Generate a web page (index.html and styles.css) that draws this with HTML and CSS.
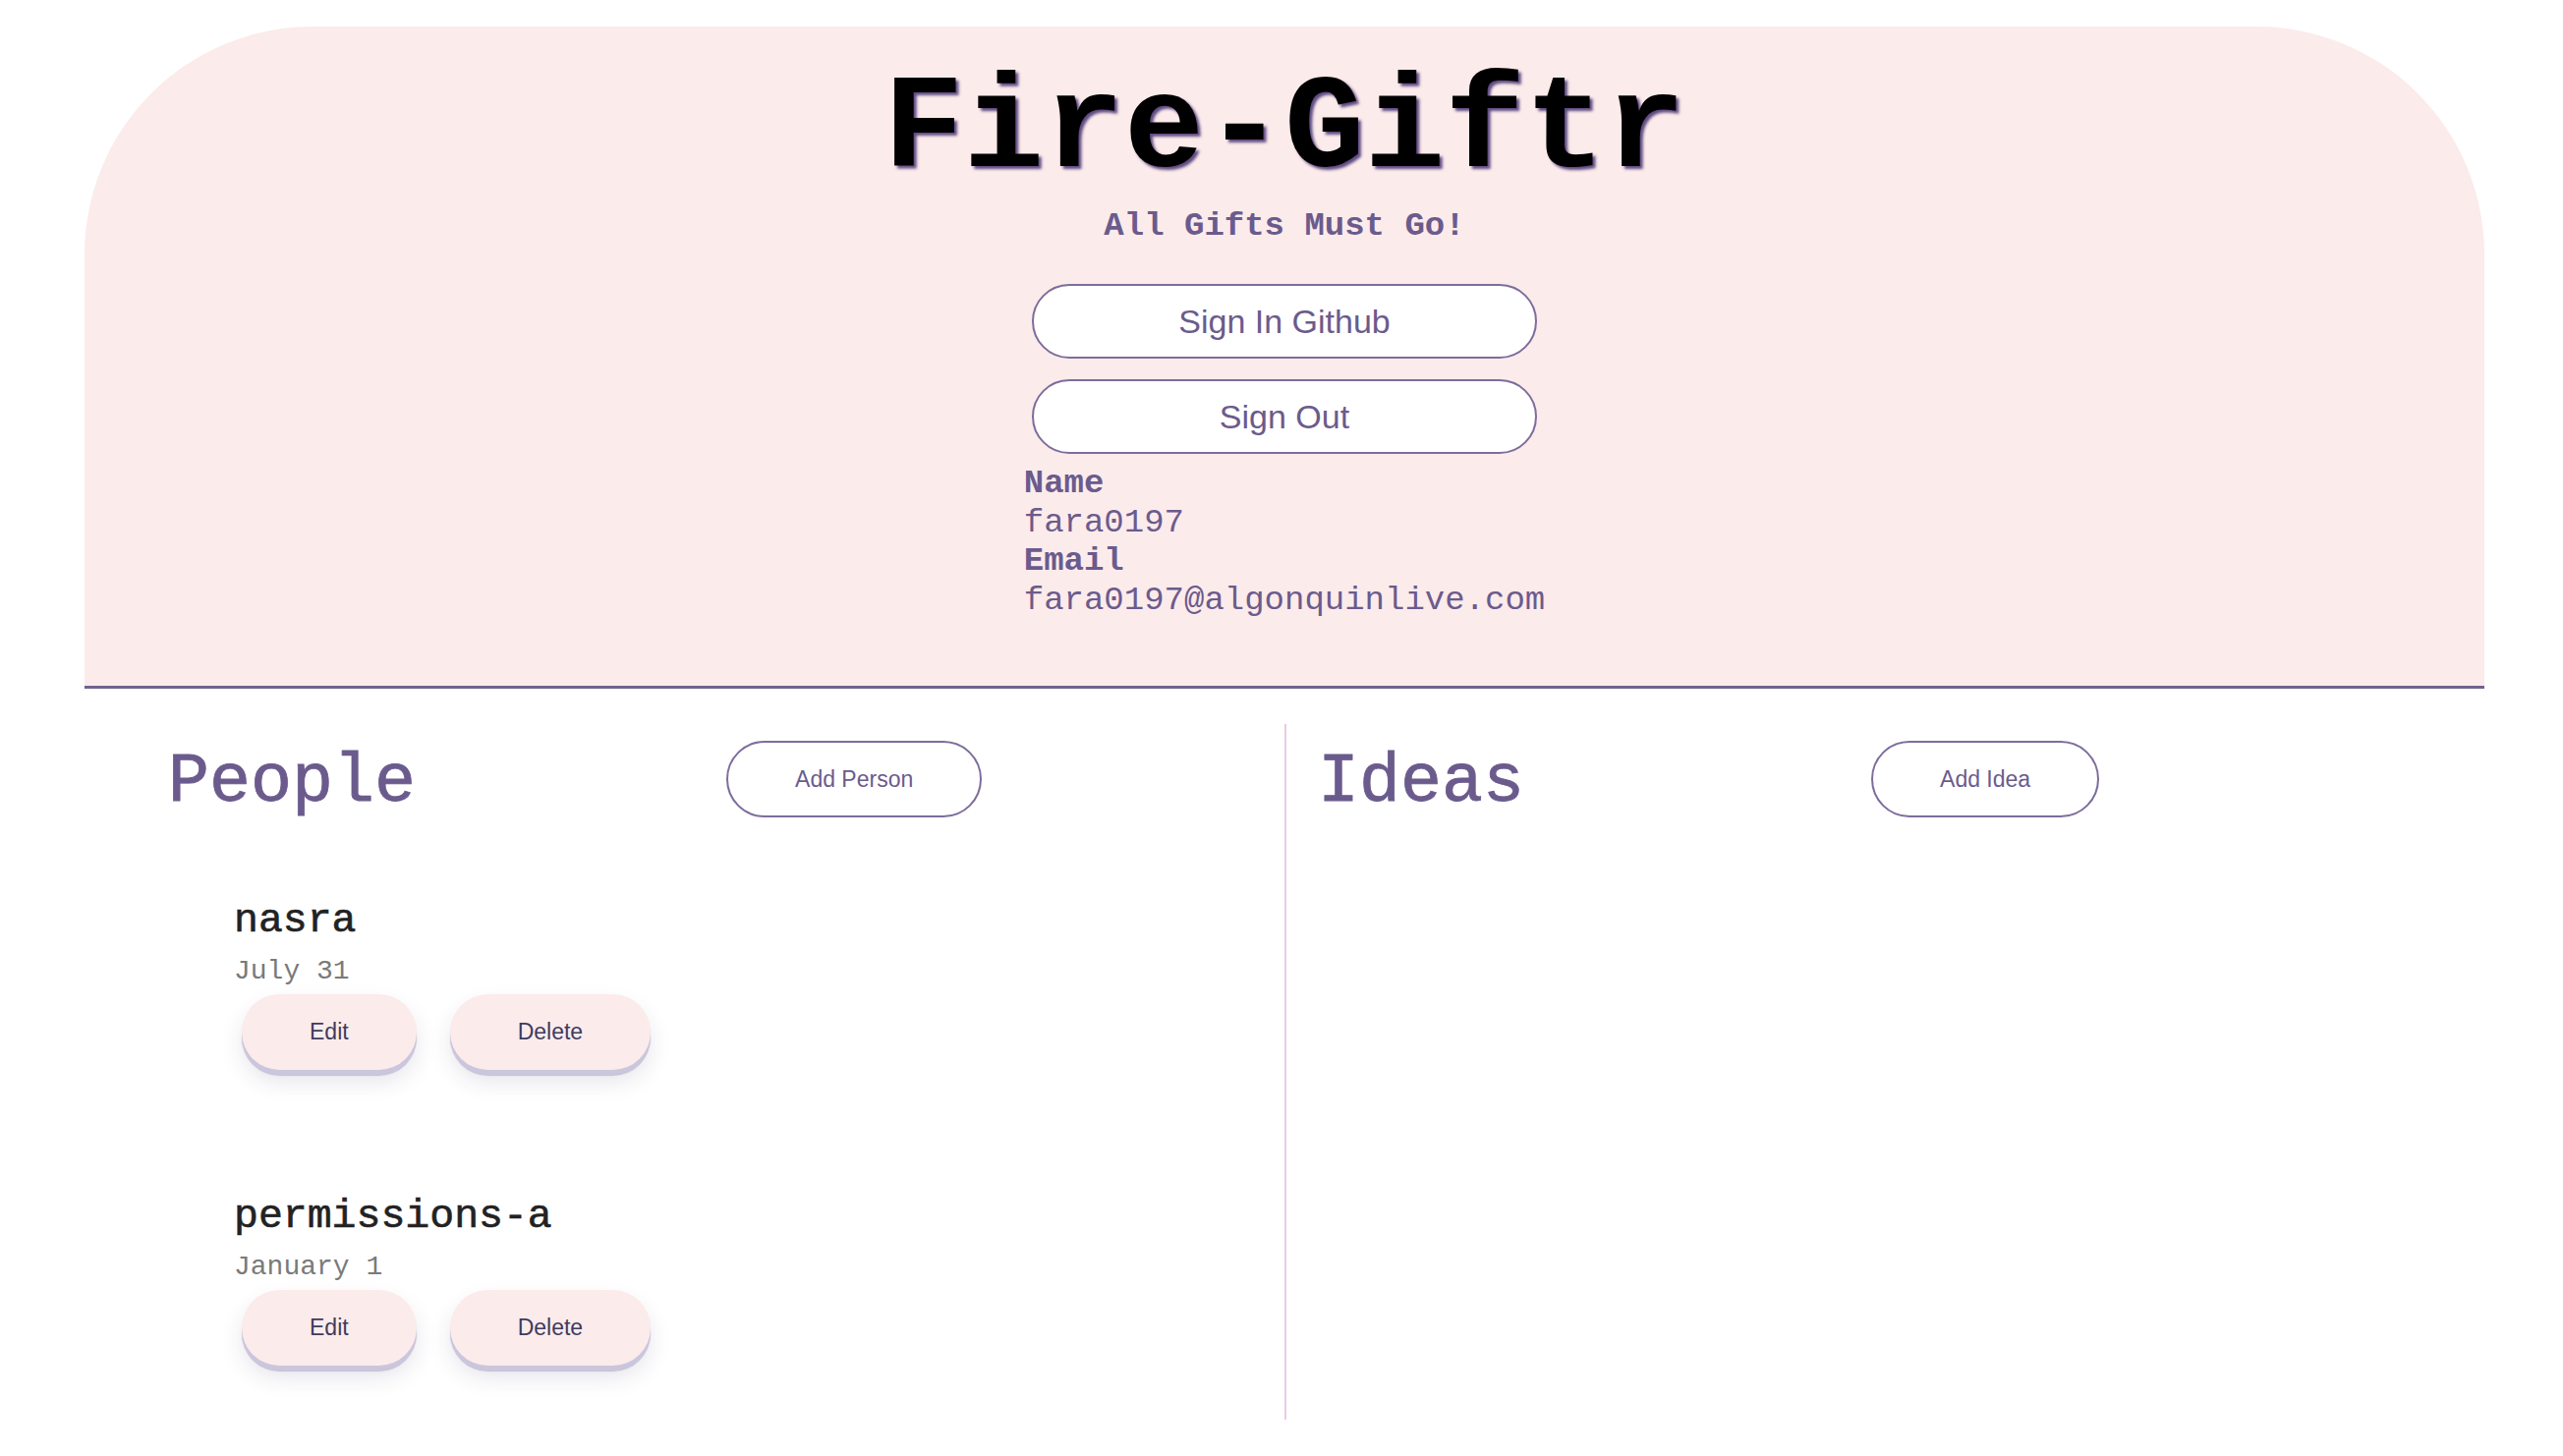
FILE: index.html
```html
<!DOCTYPE html>
<html lang="en">
<head>
<meta charset="utf-8">
<title>Fire-Giftr</title>
<link rel="stylesheet" href="styles.css">
</head>
<body>
<header class="hero">
  <h1 class="title">Fire-Giftr</h1>
  <h2 class="tagline">All Gifts Must Go!</h2>
  <div class="auth">
    <button class="auth-btn">Sign In Github</button>
    <button class="auth-btn">Sign Out</button>
  </div>
  <div class="user-wrap">
    <dl class="user-info">
      <dt>Name</dt>
      <dd>fara0197</dd>
      <dt>Email</dt>
      <dd>fara0197@algonquinlive.com</dd>
    </dl>
  </div>
</header>
<main class="board">
  <section class="col col-people">
    <div class="col-head">
      <h2 class="col-title">People</h2>
      <button class="add-btn">Add Person</button>
    </div>
    <ul class="people">
      <li class="person">
        <h3 class="person-name">nasra</h3>
        <p class="person-date">July 31</p>
        <div class="actions">
          <button class="soft-btn">Edit</button>
          <button class="soft-btn">Delete</button>
        </div>
      </li>
      <li class="person">
        <h3 class="person-name">permissions-a</h3>
        <p class="person-date">January 1</p>
        <div class="actions">
          <button class="soft-btn">Edit</button>
          <button class="soft-btn">Delete</button>
        </div>
      </li>
    </ul>
  </section>
  <section class="col col-ideas">
    <div class="col-head">
      <h2 class="col-title">Ideas</h2>
      <button class="add-btn">Add Idea</button>
    </div>
  </section>
</main>
</body>
</html>
```
FILE: styles.css
```css
* { box-sizing: border-box; }

html, body {
  margin: 0;
  padding: 0;
  background: #ffffff;
}

body {
  font-family: "Nimbus Mono PS", "Nimbus Mono L", "Liberation Mono", "Courier New", monospace;
  color: #6b5b8d;
}

button {
  font-family: "Liberation Sans", Arial, Helvetica, sans-serif;
  cursor: pointer;
}

/* ---------- header ---------- */
.hero {
  margin: 27px 80px 0 86px;
  padding: 38px 0 67px;
  background: #fcebeb;
  border-radius: 232px 232px 0 0;
  border-bottom: 3px solid #6f6390;
  text-align: center;
}

.title {
  margin: 0;
  font-size: 136px;
  line-height: 136px;
  font-weight: bold;
  color: #000;
  text-shadow: 3px 3px 3px rgba(85, 65, 125, 0.95);
}

.tagline {
  margin: 9px 0 0;
  font-size: 34px;
  line-height: 40px;
  font-weight: bold;
  color: #6b5b8d;
}

.auth {
  margin-top: 39px;
  display: flex;
  flex-direction: column;
  align-items: center;
  gap: 21px;
}

.auth-btn {
  width: 514px;
  height: 76px;
  padding: 0;
  background: #ffffff;
  border: 2px solid #7d6d9c;
  border-radius: 38px;
  font-size: 34px;
  color: #6b5b8d;
}

.user-wrap {
  margin-top: 11px;
  display: flex;
  justify-content: center;
}

.user-info {
  margin: 0;
  text-align: left;
  font-size: 34px;
  line-height: 39.5px;
  color: #6b5b8d;
}

.user-info dt {
  font-weight: bold;
}

.user-info dd {
  margin: 0;
}

/* ---------- board ---------- */
.board {
  margin: 36px 80px 0 86px;
  display: grid;
  grid-template-columns: 1221px 1fr;
}

.col {
  padding: 17px 0 55px;
}

.col-ideas {
  border-left: 2px solid #e8cbe2;
}

.col-head {
  display: flex;
  align-items: flex-start;
}

.col-people .col-head { padding-left: 85px; }
.col-ideas .col-head { padding-left: 32px; }

.col-title {
  margin: 4px 0 0;
  font-size: 70px;
  line-height: 78px;
  font-weight: normal;
  color: #6b5b8d;
  -webkit-text-stroke: 0.8px #6b5b8d;
}

.add-btn {
  height: 78px;
  padding: 0 68px;
  background: #ffffff;
  border: 2px solid #7d6d9c;
  border-radius: 39px;
  font-size: 23px;
  color: #6b5b8d;
}

.col-people .add-btn { margin-left: 316px; }
.col-ideas .add-btn { margin-left: 353px; }

.people {
  list-style: none;
  margin: 77px 0 0;
  padding: 0 0 0 152px;
  display: flex;
  flex-direction: column;
  gap: 125.5px;
}

.person-name {
  margin: 0;
  font-size: 41.5px;
  line-height: 48px;
  font-weight: normal;
  color: #222222;
  -webkit-text-stroke: 0.6px #222222;
}

.person-date {
  margin: 12px 0 0;
  font-size: 28px;
  line-height: 32px;
  color: #7a7a7a;
}

.actions {
  margin: 6.5px 0 0 8px;
  display: flex;
  gap: 34px;
}

.soft-btn {
  height: 77px;
  padding: 0 69px;
  background: #fcebeb;
  border: none;
  border-radius: 39px;
  font-size: 23px;
  color: #3e3b5f;
  box-shadow: 0 5px 0 #cac6dd, 0 6px 1px rgba(120, 110, 150, 0.35), 0 12px 22px rgba(60, 50, 90, 0.13);
}
```
